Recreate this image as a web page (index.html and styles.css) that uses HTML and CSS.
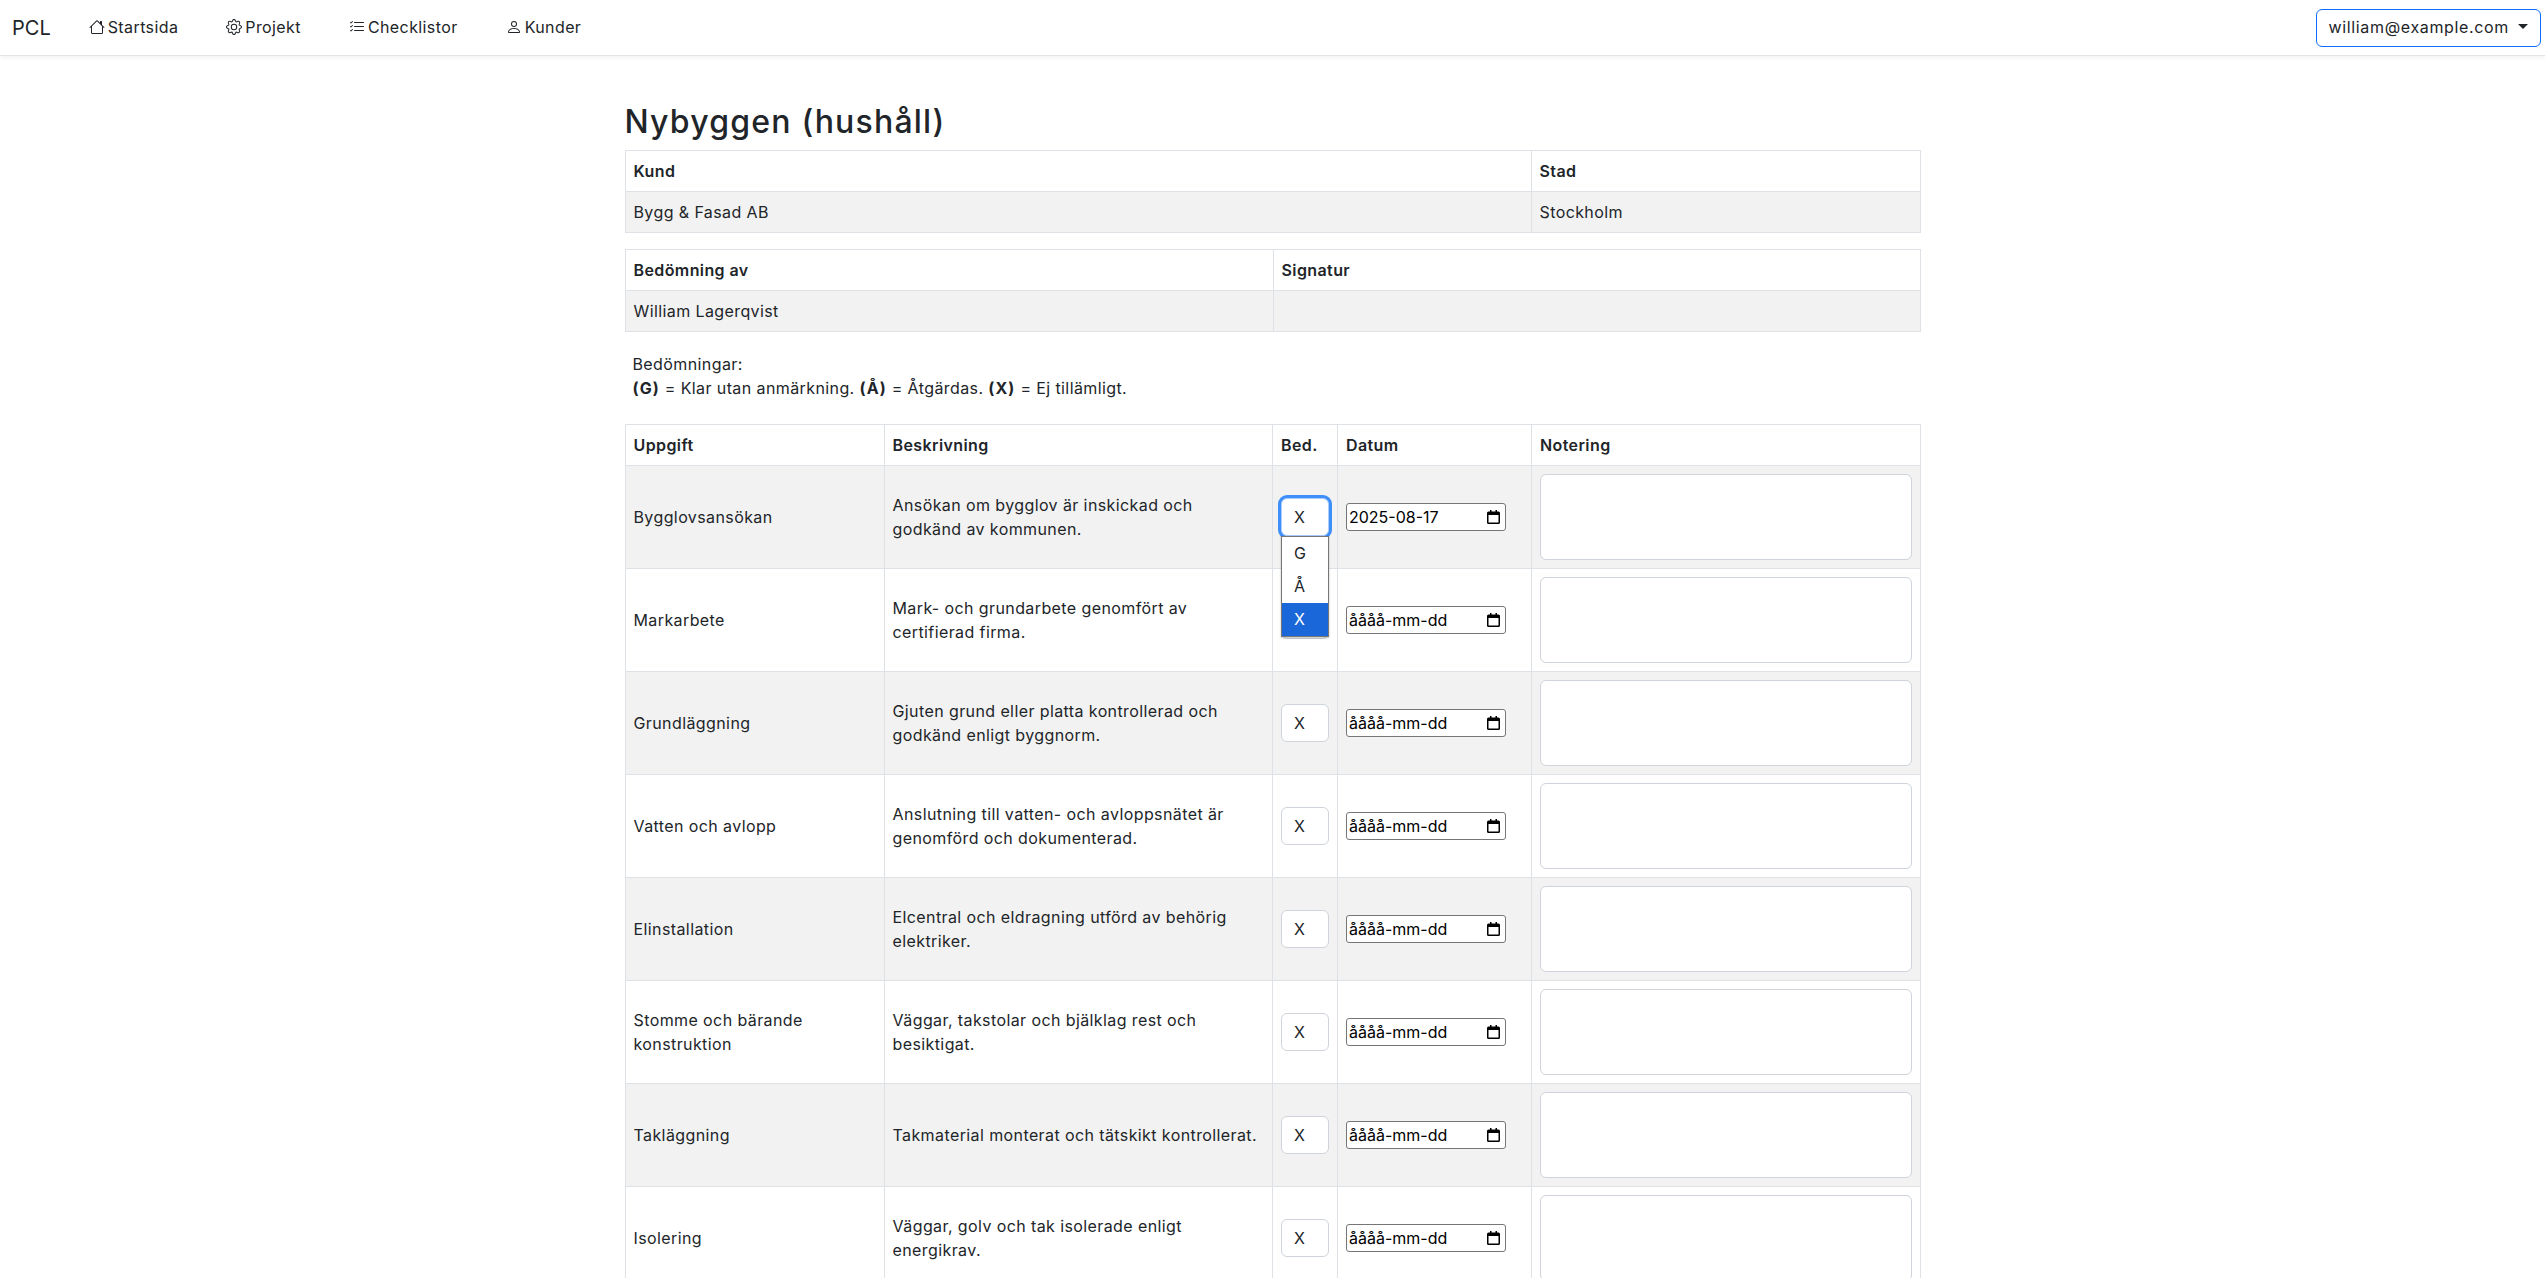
FILE: index.html
```html
<!doctype html>
<html lang="sv">
<head>
<meta charset="utf-8">
<title>PCL</title>
<link rel="stylesheet" href="styles.css">
</head>

<body>
<nav class="topbar">
	<a class="brand" href="#">PCL</a>
	<a class="navlink" href="#">
		<svg class="ico" viewBox="0 0 16 16"><path d="M8.707 1.5a1 1 0 0 0-1.414 0L.646 8.146a.5.5 0 0 0 .708.708L2 8.207V13.500A1.500 1.500 0 0 0 3.500 15h9a1.500 1.500 0 0 0 1.500-1.500V8.207l.646.647a.5.5 0 0 0 .708-.708L13 5.793V2.500a.5.5 0 0 0-.5-.5h-1a.5.5 0 0 0-.5.5v1.293L8.707 1.500ZM13 7.207V13.500a.5.5 0 0 1-.5.5h-9a.5.5 0 0 1-.5-.5V7.207l5-5 5 5Z"/></svg>Startsida</a>
	<a class="navlink" href="#">
		<svg class="ico" viewBox="0 0 16 16"><path d="M8 4.754a3.246 3.246 0 1 0 0 6.492 3.246 3.246 0 0 0 0-6.492zM5.754 8a2.246 2.246 0 1 1 4.492 0 2.246 2.246 0 0 1-4.492 0z"/><path d="M9.796 1.343c-.527-1.79-3.065-1.79-3.592 0l-.094.319a.873.873 0 0 1-1.255.52l-.292-.16c-1.64-.892-3.433.902-2.54 2.541l.159.292a.873.873 0 0 1-.52 1.255l-.319.094c-1.79.527-1.79 3.065 0 3.592l.319.094a.873.873 0 0 1 .52 1.255l-.16.292c-.892 1.64.901 3.434 2.541 2.54l.292-.159a.873.873 0 0 1 1.255.52l.094.319c.527 1.79 3.065 1.79 3.592 0l.094-.319a.873.873 0 0 1 1.255-.52l.292.16c1.64.893 3.434-.902 2.54-2.541l-.159-.292a.873.873 0 0 1 .52-1.255l.319-.094c1.79-.527 1.79-3.065 0-3.592l-.319-.094a.873.873 0 0 1-.52-1.255l.16-.292c.893-1.64-.902-3.433-2.541-2.54l-.292.159a.873.873 0 0 1-1.255-.52l-.094-.319zm-2.633.283c.246-.835 1.428-.835 1.674 0l.094.319a1.873 1.873 0 0 0 2.693 1.115l.291-.16c.764-.415 1.6.42 1.184 1.185l-.159.292a1.873 1.873 0 0 0 1.116 2.692l.318.094c.835.246.835 1.428 0 1.674l-.319.094a1.873 1.873 0 0 0-1.115 2.693l.16.291c.415.764-.42 1.6-1.185 1.184l-.291-.159a1.873 1.873 0 0 0-2.693 1.116l-.094.318c-.246.835-1.428.835-1.674 0l-.094-.319a1.873 1.873 0 0 0-2.692-1.115l-.292.16c-.764.415-1.6-.42-1.184-1.185l.159-.291A1.873 1.873 0 0 0 1.945 8.930l-.319-.094c-.835-.246-.835-1.428 0-1.674l.319-.094A1.873 1.873 0 0 0 3.060 4.377l-.16-.292c-.415-.764.42-1.6 1.185-1.184l.292.159a1.873 1.873 0 0 0 2.692-1.115l.094-.319z"/></svg>Projekt</a>
	<a class="navlink" href="#">
		<svg class="ico" viewBox="0 0 16 16"><path fill-rule="evenodd" d="M5 11.500a.5.5 0 0 1 .5-.5h9a.5.5 0 0 1 0 1h-9a.5.5 0 0 1-.5-.5zm0-4a.5.5 0 0 1 .5-.5h9a.5.5 0 0 1 0 1h-9a.5.5 0 0 1-.5-.5zm0-4a.5.5 0 0 1 .5-.5h9a.5.5 0 0 1 0 1h-9a.5.5 0 0 1-.5-.5zM3.854 2.146a.5.5 0 0 1 0 .708l-1.500 1.500a.5.5 0 0 1-.708 0l-.5-.5a.5.5 0 1 1 .708-.708L2 3.293l1.146-1.147a.5.5 0 0 1 .708 0zm0 4a.5.5 0 0 1 0 .708l-1.500 1.500a.5.5 0 0 1-.708 0l-.5-.5a.5.5 0 1 1 .708-.708L2 7.293l1.146-1.147a.5.5 0 0 1 .708 0zm0 4a.5.5 0 0 1 0 .708l-1.500 1.500a.5.5 0 0 1-.708 0l-.5-.5a.5.5 0 0 1 .708-.708l.146.147 1.146-1.147a.5.5 0 0 1 .708 0z"/></svg>Checklistor</a>
	<a class="navlink" href="#">
		<svg class="ico" viewBox="0 0 16 16"><path d="M8 8a3 3 0 1 0 0-6 3 3 0 0 0 0 6zm2-3a2 2 0 1 1-4 0 2 2 0 0 1 4 0zm4 8c0 1-1 1-1 1H3s-1 0-1-1 1-4 6-4 6 3 6 4zm-1-.004c-.001-.246-.154-.986-.832-1.664C11.516 10.680 10.289 10 8 10c-2.290 0-3.516.68-4.168 1.332-.678.678-.83 1.418-.832 1.664h10z"/></svg>Kunder</a>
	<button class="userbtn">william@example.com<span class="caret"></span></button>
</nav>

<main class="page">
	<h2 class="title">Nybyggen (hushåll)</h2>

	<table class="grid info">
		<colgroup><col class="c-wide"><col></colgroup>
		<tr><th>Kund</th><th>Stad</th></tr>
		<tr class="odd"><td>Bygg &amp; Fasad AB</td><td>Stockholm</td></tr>
	</table>

	<table class="grid info">
		<colgroup><col class="c-half"><col></colgroup>
		<tr><th>Bedömning av</th><th>Signatur</th></tr>
		<tr class="odd"><td>William Lagerqvist</td><td></td></tr>
	</table>

	<p class="legend">Bedömningar:<br><b>(G)</b> = Klar utan anmärkning. <b>(Å)</b> = Åtgärdas. <b>(X)</b> = Ej tillämligt.</p>

	<table class="grid tasks">
		<colgroup><col class="c1"><col class="c2"><col class="c3"><col class="c4"><col></colgroup>
		<tr><th>Uppgift</th><th>Beskrivning</th><th>Bed.</th><th>Datum</th><th>Notering</th></tr>
		<tr class="odd">
			<td>Bygglovsansökan</td>
			<td>Ansökan om bygglov är inskickad och<br>godkänd av kommunen.</td>
			<td class="bedcell">
				<div class="sel focused">X</div>
				<ul class="popup"><li>G</li><li>Å</li><li class="picked">X</li></ul>
			</td>
			<td><div class="date"><span>2025-08-17</span><svg class="cal" viewBox="0 0 13 14"><path d="M3 0h1.500v1.500h4V0H10v1.500h1.500A1.500 1.500 0 0 1 13 3v9.500a1.500 1.500 0 0 1-1.500 1.500h-10A1.500 1.500 0 0 1 0 12.500V3a1.500 1.500 0 0 1 1.500-1.500H3V0zM1.500 5v7.500h10V5h-10z"/></svg></div></td>
			<td><div class="note"></div></td>
		</tr>
		<tr>
			<td>Markarbete</td>
			<td>Mark- och grundarbete genomfört av<br>certifierad firma.</td>
			<td class="bedcell"><div class="sel">X</div></td>
			<td><div class="date"><span>åååå-mm-dd</span><svg class="cal" viewBox="0 0 13 14"><path d="M3 0h1.500v1.500h4V0H10v1.500h1.500A1.500 1.500 0 0 1 13 3v9.500a1.500 1.500 0 0 1-1.500 1.500h-10A1.500 1.500 0 0 1 0 12.500V3a1.500 1.500 0 0 1 1.500-1.500H3V0zM1.500 5v7.500h10V5h-10z"/></svg></div></td>
			<td><div class="note"></div></td>
		</tr>
		<tr class="odd">
			<td>Grundläggning</td>
			<td>Gjuten grund eller platta kontrollerad och<br>godkänd enligt byggnorm.</td>
			<td class="bedcell"><div class="sel">X</div></td>
			<td><div class="date"><span>åååå-mm-dd</span><svg class="cal" viewBox="0 0 13 14"><path d="M3 0h1.500v1.500h4V0H10v1.500h1.500A1.500 1.500 0 0 1 13 3v9.500a1.500 1.500 0 0 1-1.500 1.500h-10A1.500 1.500 0 0 1 0 12.500V3a1.500 1.500 0 0 1 1.500-1.500H3V0zM1.500 5v7.500h10V5h-10z"/></svg></div></td>
			<td><div class="note"></div></td>
		</tr>
		<tr>
			<td>Vatten och avlopp</td>
			<td>Anslutning till vatten- och avloppsnätet är<br>genomförd och dokumenterad.</td>
			<td class="bedcell"><div class="sel">X</div></td>
			<td><div class="date"><span>åååå-mm-dd</span><svg class="cal" viewBox="0 0 13 14"><path d="M3 0h1.500v1.500h4V0H10v1.500h1.500A1.500 1.500 0 0 1 13 3v9.500a1.500 1.500 0 0 1-1.500 1.500h-10A1.500 1.500 0 0 1 0 12.500V3a1.500 1.500 0 0 1 1.500-1.500H3V0zM1.500 5v7.500h10V5h-10z"/></svg></div></td>
			<td><div class="note"></div></td>
		</tr>
		<tr class="odd">
			<td>Elinstallation</td>
			<td>Elcentral och eldragning utförd av behörig<br>elektriker.</td>
			<td class="bedcell"><div class="sel">X</div></td>
			<td><div class="date"><span>åååå-mm-dd</span><svg class="cal" viewBox="0 0 13 14"><path d="M3 0h1.500v1.500h4V0H10v1.500h1.500A1.500 1.500 0 0 1 13 3v9.500a1.500 1.500 0 0 1-1.500 1.500h-10A1.500 1.500 0 0 1 0 12.500V3a1.500 1.500 0 0 1 1.500-1.500H3V0zM1.500 5v7.500h10V5h-10z"/></svg></div></td>
			<td><div class="note"></div></td>
		</tr>
		<tr>
			<td>Stomme och bärande<br>konstruktion</td>
			<td>Väggar, takstolar och bjälklag rest och<br>besiktigat.</td>
			<td class="bedcell"><div class="sel">X</div></td>
			<td><div class="date"><span>åååå-mm-dd</span><svg class="cal" viewBox="0 0 13 14"><path d="M3 0h1.500v1.500h4V0H10v1.500h1.500A1.500 1.500 0 0 1 13 3v9.500a1.500 1.500 0 0 1-1.500 1.500h-10A1.500 1.500 0 0 1 0 12.500V3a1.500 1.500 0 0 1 1.500-1.500H3V0zM1.500 5v7.500h10V5h-10z"/></svg></div></td>
			<td><div class="note"></div></td>
		</tr>
		<tr class="odd">
			<td>Takläggning</td>
			<td>Takmaterial monterat och tätskikt kontrollerat.</td>
			<td class="bedcell"><div class="sel">X</div></td>
			<td><div class="date"><span>åååå-mm-dd</span><svg class="cal" viewBox="0 0 13 14"><path d="M3 0h1.500v1.500h4V0H10v1.500h1.500A1.500 1.500 0 0 1 13 3v9.500a1.500 1.500 0 0 1-1.500 1.500h-10A1.500 1.500 0 0 1 0 12.500V3a1.500 1.500 0 0 1 1.500-1.500H3V0zM1.500 5v7.500h10V5h-10z"/></svg></div></td>
			<td><div class="note"></div></td>
		</tr>
		<tr>
			<td>Isolering</td>
			<td>Väggar, golv och tak isolerade enligt<br>energikrav.</td>
			<td class="bedcell"><div class="sel">X</div></td>
			<td><div class="date"><span>åååå-mm-dd</span><svg class="cal" viewBox="0 0 13 14"><path d="M3 0h1.500v1.500h4V0H10v1.500h1.500A1.500 1.500 0 0 1 13 3v9.500a1.500 1.500 0 0 1-1.500 1.500h-10A1.500 1.500 0 0 1 0 12.500V3a1.500 1.500 0 0 1 1.500-1.500H3V0zM1.500 5v7.500h10V5h-10z"/></svg></div></td>
			<td><div class="note"></div></td>
		</tr>
	</table>
</main>
</body>
</html>
```

FILE: styles.css
```css
* {box-sizing:border-box;}

html,body {height:100%; overflow:hidden;}
body {margin:0; background:#fff; color:#212529; font-family:Inter,"Noto Sans",sans-serif; font-size:16px; line-height:24px; letter-spacing:.4px;}

.topbar {display:flex; align-items:center; height:56px; padding:0 4px 0 12px; background:#fff; border-bottom:1px solid #e3e3e3; box-shadow:0 2px 4px rgba(0,0,0,.05);}
.brand {margin-right:38px; color:#212529; font-size:20px; letter-spacing:0; text-decoration:none;}
.navlink {display:flex; align-items:center; margin-right:48px; padding-bottom:2px; color:#212529; text-decoration:none;}
.ico {width:16px; height:16px; margin-right:3px; fill:#212529;}
.userbtn {display:flex; align-items:center; height:38px; margin-left:auto; padding:0 12px 2px; background:#fff; border:1px solid #0d6efd; border-radius:6px; color:#212529; font:inherit; letter-spacing:.65px;}
.caret {margin-left:9px; border-top:5px solid #212529; border-left:5px solid transparent; border-right:5px solid transparent;}

.page {width:1296px; margin:0 auto; padding-top:47px;}
.title {margin:0 0 9px; font-size:32px; font-weight:500; line-height:38px; letter-spacing:1.2px;}

.grid {width:100%; margin-bottom:16px; border-collapse:collapse; table-layout:fixed;}
.grid th,.grid td {padding:8px; border:1px solid #dee2e6; text-align:left; vertical-align:middle;}
.grid th {font-weight:600;}
.odd td {background:#f2f2f2;}
.c-wide {width:906px;}
.c-half {width:648px;}

.legend {margin:20px 8px 24px;}
.legend b {letter-spacing:1.1px;}

.c1 {width:259px;}
.c2 {width:388.5px;}
.c3 {width:65px;}
.c4 {width:194px;}

.bedcell {position:relative;}
.sel {width:48px; height:38px; padding:6px 12px; background:#fff; border:1px solid #ced4da; border-radius:6px;}
.sel.focused {border-color:#a9cdfd; box-shadow:0 0 0 3px #3f8ffa;}
.popup {position:absolute; z-index:5; left:8px; top:70px; width:48px; margin:0; padding:0; list-style:none; background:#fff; border:1px solid #767676; box-shadow:0 1px 2px rgba(0,0,0,.25);}
.popup li {height:33px; padding:4px 12px;}
.popup .picked {background:#1a67d9; color:#fff;}

.date {display:flex; align-items:center; justify-content:space-between; width:160px; height:28px; padding:0 5px 0 2px; background:#fff; border:1px solid #767676; border-radius:3px; color:#000; letter-spacing:0;}
.cal {width:13px; height:14px; fill:#000;}
.note {height:86px; background:#fff; border:1px solid #ced4da; border-radius:6px;}
```
